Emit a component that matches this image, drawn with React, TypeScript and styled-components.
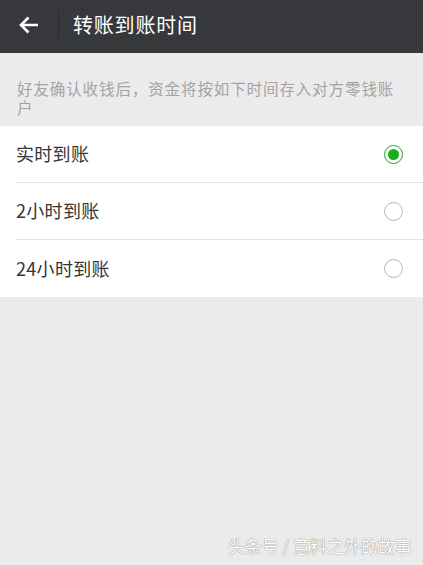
import styled, { createGlobalStyle } from "styled-components";

const GlobalStyle = createGlobalStyle`
  html, body {
    margin: 0;
    padding: 0;
    background: #ebebeb;
  }
  body {
    font-family: "Noto Sans CJK SC", "Noto Sans", sans-serif;
  }
`;

const Page = styled.div`
  width: 423px;
  height: 565px;
  background: #ebebeb;
  display: flex;
  flex-direction: column;
  overflow: hidden;
`;

const TopBar = styled.header`
  height: 53px;
  background: #37383c;
  display: flex;
  align-items: center;
  flex-shrink: 0;
`;

const BackButton = styled.div`
  width: 58px;
  height: 53px;
  display: flex;
  align-items: center;
  justify-content: center;
  padding-bottom: 4px;
  box-sizing: border-box;
`;

const BarDivider = styled.div`
  width: 1px;
  height: 28px;
  background: #2b2c2f;
  margin-bottom: 4px;
`;

const Title = styled.h1`
  margin: 0 0 4px 14px;
  font-size: 20px;
  font-weight: 400;
  color: #ffffff;
  letter-spacing: 0.8px;
`;

const Hint = styled.p`
  margin: 0;
  padding: 26px 24px 9px 17px;
  font-size: 15.5px;
  line-height: 19px;
  letter-spacing: 0.9px;
  color: #a3a3a3;
`;

const OptionList = styled.div`
  background: #ffffff;
  display: flex;
  flex-direction: column;
`;

const OptionRow = styled.div<{ $last?: boolean }>`
  height: 57px;
  margin-left: 16px;
  padding-right: 20px;
  display: flex;
  align-items: center;
  justify-content: space-between;
  border-bottom: ${(p) => (p.$last ? "none" : "1px solid #e2e2e2")};
  box-sizing: border-box;
`;

const OptionLabel = styled.span`
  font-size: 18px;
  letter-spacing: 0.3px;
  color: #353535;
  padding-bottom: 2px;
`;

const Radio = styled.span<{ $checked?: boolean }>`
  width: 19px;
  height: 19px;
  border-radius: 50%;
  box-sizing: border-box;
  border: 1.5px solid ${(p) => (p.$checked ? "#1aad19" : "#b5b5b5")};
  display: flex;
  align-items: center;
  justify-content: center;
  &::after {
    content: "";
    display: ${(p) => (p.$checked ? "block" : "none")};
    width: 11px;
    height: 11px;
    border-radius: 50%;
    background: #1aad19;
  }
`;

const Spacer = styled.div`
  flex: 1;
`;

const Watermark = styled.div`
  align-self: flex-end;
  margin: 0 11px 7px 0;
  font-size: 17px;
  color: #ffffff;
  text-shadow: 0 0 1px #8a8a8a, 0 0 1px #8a8a8a;
`;

const options = [
  { label: "实时到账", checked: true },
  { label: "2小时到账", checked: false },
  { label: "24小时到账", checked: false },
];

export default function App() {
  return (
    <Page>
      <GlobalStyle />
      <TopBar>
        <BackButton>
          <svg width="20" height="18" viewBox="0 0 20 18" fill="none">
            <path
              d="M19 9H2.5M9.5 1.5L2 9l7.5 7.5"
              stroke="#ffffff"
              strokeWidth="2.6"
            />
          </svg>
        </BackButton>
        <BarDivider />
        <Title>转账到账时间</Title>
      </TopBar>
      <Hint>好友确认收钱后，资金将按如下时间存入对方零钱账户</Hint>
      <OptionList>
        {options.map((o, i) => (
          <OptionRow key={o.label} $last={i === options.length - 1}>
            <OptionLabel>{o.label}</OptionLabel>
            <Radio $checked={o.checked} />
          </OptionRow>
        ))}
      </OptionList>
      <Spacer />
      <Watermark>头条号 / 意料之外的故事</Watermark>
    </Page>
  );
}
